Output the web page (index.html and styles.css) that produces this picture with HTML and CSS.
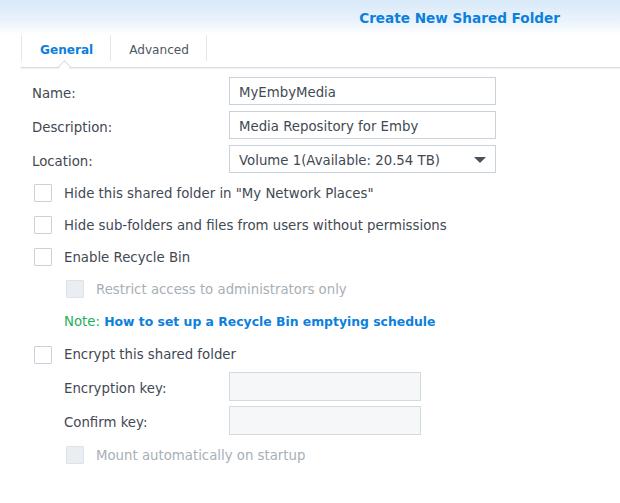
FILE: index.html
```html
<!DOCTYPE html>
<html>
<head>
<meta charset="utf-8">
<link rel="stylesheet" href="styles.css">
</head>
<body>
<div class="header"><span class="title">Create New Shared Folder</span></div>
<div class="tabs">
  <div class="tab active">General</div>
  <div class="tab">Advanced</div>
</div>
<div class="form">
  <div class="field">
    <label class="label">Name:</label>
    <div class="input">MyEmbyMedia</div>
  </div>
  <div class="field">
    <label class="label">Description:</label>
    <div class="input">Media Repository for Emby</div>
  </div>
  <div class="field last">
    <label class="label">Location:</label>
    <div class="input select">Volume 1(Available: 20.54 TB)<span class="arrow"></span></div>
  </div>
  <div class="check"><span class="box"></span>Hide this shared folder in "My Network Places"</div>
  <div class="check"><span class="box"></span>Hide sub-folders and files from users without permissions</div>
  <div class="check"><span class="box"></span>Enable Recycle Bin</div>
  <div class="check sub disabled"><span class="box"></span>Restrict access to administrators only</div>
  <div class="note"><span class="note-label">Note:</span> <a class="link">How to set up a Recycle Bin emptying schedule</a></div>
  <div class="check encrypt"><span class="box"></span>Encrypt this shared folder</div>
  <div class="keys">
    <div class="field subfield">
      <label class="label">Encryption key:</label>
      <div class="input short disabled-input"></div>
    </div>
    <div class="field subfield">
      <label class="label">Confirm key:</label>
      <div class="input short disabled-input"></div>
    </div>
  </div>
  <div class="check sub disabled"><span class="box"></span>Mount automatically on startup</div>
</div>
</body>
</html>
```
FILE: styles.css
```css
* { box-sizing: border-box; }
html, body { margin: 0; padding: 0; }
body {
  width: 620px;
  height: 503px;
  background: #fff;
  font-family: "DejaVu Sans", Verdana, sans-serif;
  font-size: 13.3px;
  color: #3f4953;
  overflow: hidden;
}
.header {
  height: 35px;
  background: linear-gradient(to bottom, #d8e9f9 0%, #eaf3fc 60%, #ffffff 100%);
  display: flex;
  justify-content: flex-end;
  align-items: center;
  padding-right: 60px;
  padding-top: 1px;
}
.title {
  color: #0c80dc;
  font-weight: bold;
  font-size: 13.6px;
}
.tabs {
  margin-left: 21px;
  height: 33px;
  display: flex;
  border-bottom: 1px solid #d5dbe1;
  box-shadow: 0 1px 1px rgba(0,0,0,0.05);
  position: relative;
}
.tab {
  height: 26px;
  line-height: 26px;
  padding: 2px 17px 0 18px;
  border-right: 1px solid #e2e7ec;
  color: #4d5863;
  font-size: 12.1px;
  position: relative;
}
.tab.active {
  border-left: 1px solid #e2e7ec;
  color: #0c80dc;
  font-weight: bold;
}
.tab.active::after {
  content: "";
  position: absolute;
  left: 38px;
  top: 27px;
  width: 8px;
  height: 8px;
  background: #fff;
  border-left: 1px solid #d5dbe1;
  border-top: 1px solid #d5dbe1;
  transform: rotate(45deg);
}
.form {
  padding: 9px 0 0 32px;
}
.field {
  display: flex;
  align-items: center;
  height: 28px;
  margin-bottom: 6px;
}
.field.last { margin-bottom: 4px; }
.label {
  width: 197px;
  flex: none;
  padding-top: 4px;
}
.input {
  width: 267px;
  height: 28px;
  border: 1px solid #c9d2db;
  padding: 4px 9px 0;
  line-height: 22px;
  color: #3f4953;
  position: relative;
}
.select .arrow {
  position: absolute;
  right: 9px;
  top: 11px;
  width: 0;
  height: 0;
  border-left: 6px solid transparent;
  border-right: 6px solid transparent;
  border-top: 6px solid #4a535c;
}
.check {
  display: flex;
  align-items: center;
  height: 32px;
  padding-left: 2px;
}
.check.encrypt { height: 31px; }
.box {
  width: 18px;
  height: 18px;
  border: 1px solid #c9d2db;
  background: #fff;
  border-radius: 1px;
  margin-right: 12px;
  flex: none;
}
.check.sub { padding-left: 34px; }
.check.disabled { color: #a7afb7; }
.check.disabled .box {
  background: #e9eef3;
  border-color: #dde3e9;
}
.note {
  height: 34px;
  line-height: 34px;
  padding-left: 32px;
}
.note-label { color: #1fb05a; }
.link { color: #0c80dc; font-weight: bold; font-size: 12.4px; }
.keys {
  padding-top: 2px;
  padding-bottom: 4px;
}
.subfield {
  padding-left: 32px;
  height: 29px;
  margin-bottom: 5px;
}
.subfield:last-child { margin-bottom: 0; }
.subfield .label { width: 165px; }
.input.short {
  width: 192px;
  height: 29px;
}
.disabled-input {
  background: #f5f7f9;
  border-color: #d2dae2;
}
```
